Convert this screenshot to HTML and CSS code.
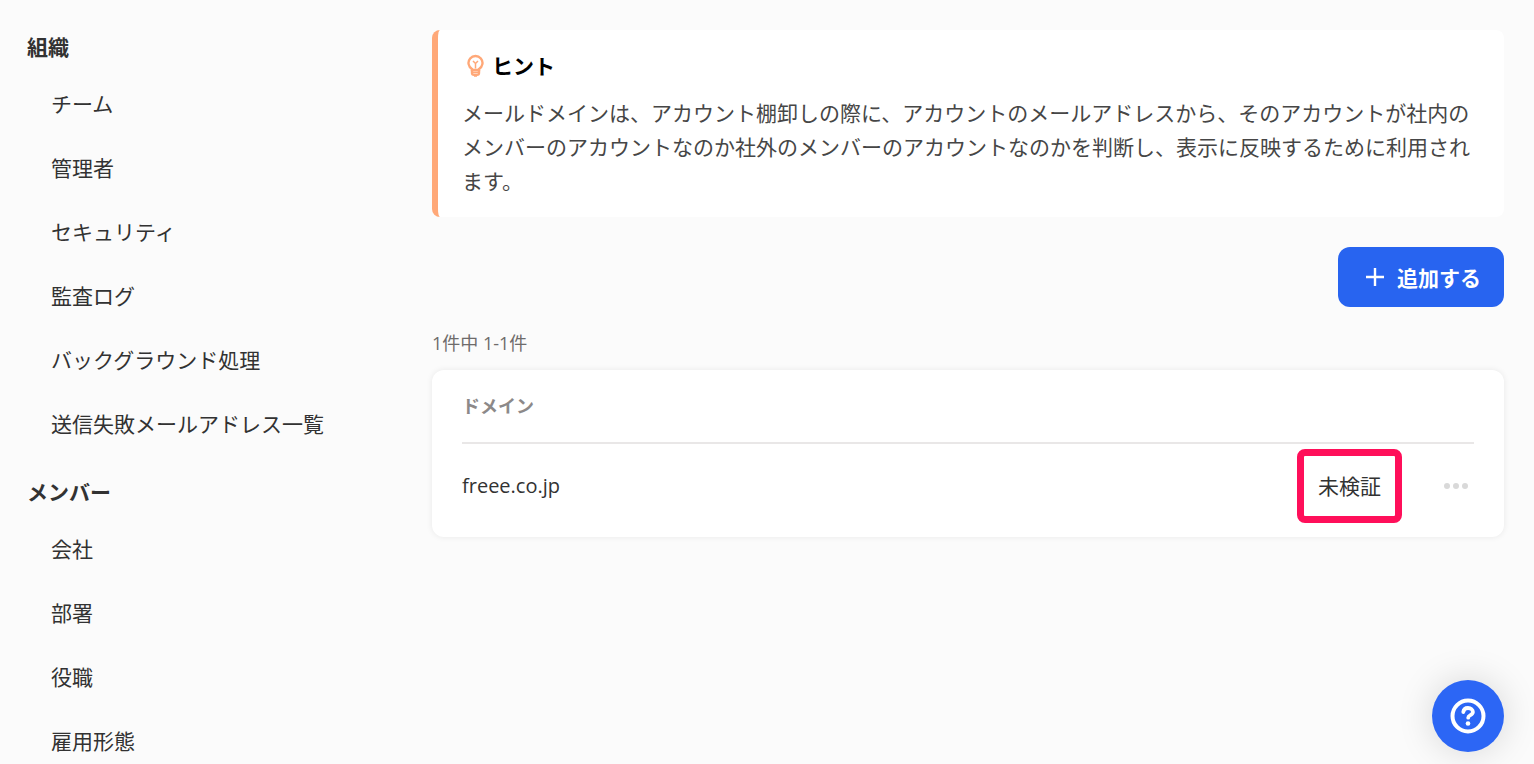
FILE: index.html
```html
<!DOCTYPE html>
<html lang="ja">

<head>
    <meta charset="UTF-8">
    <meta name="viewport" content="width=device-width, initial-scale=1.0">
    <title>メールドメイン</title>
    <link rel="stylesheet" href="styles.css">
</head>

<body>
    <div class="layout">
        <!-- サイドメニュー -->
        <nav class="sidebar">
            <h2 class="menu-title">組織</h2>
            <ul class="menu">
                <li><a href="#">チーム</a></li>
                <li><a href="#">管理者</a></li>
                <li><a href="#">セキュリティ</a></li>
                <li><a href="#">監査ログ</a></li>
                <li><a href="#">バックグラウンド処理</a></li>
                <li><a href="#">送信失敗メールアドレス一覧</a></li>
            </ul>
            <h2 class="menu-title">メンバー</h2>
            <ul class="menu">
                <li><a href="#">会社</a></li>
                <li><a href="#">部署</a></li>
                <li><a href="#">役職</a></li>
                <li><a href="#">雇用形態</a></li>
            </ul>
        </nav>

        <main class="content">
            <section class="hint">
                <h3 class="hint-title">
                    <svg class="hint-icon" width="18" height="24" viewBox="0 0 18 24" fill="none" stroke="#ffa878" stroke-width="2.4">
                        <path d="M6 15a7 7 0 1 1 7 0v1H6z" />
                        <path d="M7 7l2.5 2.5L12 7M9.5 9.500v5" stroke-width="1.500" />
                        <path d="M6 15v4c0 1 1 1.800 2 1.800h3c1 0 2-.8 2-1.800v-4" />
                        <path d="M6 18.200h7M8 22h3" stroke-width="1.600" />
                    </svg>
                    ヒント
                </h3>
                <p class="hint-text">メールドメインは、アカウント棚卸しの際に、アカウントのメールアドレスから、そのアカウントが社内のメンバーのアカウントなのか社外のメンバーのアカウントなのかを判断し、表示に反映するために利用されます。</p>
            </section>

            <div class="actions">
                <button type="button" class="add-button">
                    <svg width="18" height="18" viewBox="0 0 18 18" stroke="#fff" stroke-width="2.400">
                        <path d="M9 0v18M0 9h18" />
                    </svg>
                    追加する
                </button>
            </div>

            <p class="count">1件中 1-1件</p>

            <!-- ドメイン一覧 -->
            <div class="card">
                <table class="domains">
                    <thead>
                        <tr>
                            <th colspan="3">ドメイン</th>
                        </tr>
                    </thead>
                    <tbody>
                        <tr>
                            <td class="domain">freee.co.jp</td>
                            <td class="status"><span class="status-label">未検証</span></td>
                            <td class="more">
                                <button type="button" class="more-button" aria-label="メニュー">
                                    <svg width="24" height="6" viewBox="0 0 24 6" fill="#d9d9d9">
                                        <circle cx="3" cy="3" r="3" />
                                        <circle cx="12" cy="3" r="3" />
                                        <circle cx="21" cy="3" r="3" />
                                    </svg>
                                </button>
                            </td>
                        </tr>
                    </tbody>
                </table>
            </div>
        </main>
    </div>

    <button type="button" class="help-button" aria-label="ヘルプ">
        <svg width="36" height="36" viewBox="0 0 36 36" fill="none" stroke="#fff" stroke-linecap="round" stroke-linejoin="round">
            <circle cx="18" cy="18" r="15.500" stroke-width="4" />
            <path d="M13.300 14c.3-2.500 2.200-4 4.700-4 2.800 0 4.900 1.600 4.900 4.100 0 3.200-4.700 2.900-4.700 5.600" stroke-width="3.800" />
            <circle cx="18" cy="25.500" r="2.300" fill="#fff" stroke="none" />
        </svg>
    </button>
</body>

</html>
```
FILE: styles.css
```css
* {
    box-sizing: border-box;
}

body {
    margin: 0;
    background: #fbfbfb;
    color: #323232;
    font-family: "Open Sans", "Noto Sans CJK JP", sans-serif;
    font-size: 21px;
    line-height: 34px;
}

h2,
h3,
p,
ul {
    margin: 0;
    padding: 0;
    font-size: 21px;
}

button {
    border: 0;
    font-family: inherit;
    font-size: 21px;
    cursor: pointer;
}

.layout {
    display: flex;
}

.sidebar {
    flex: 0 0 432px;
    padding: 30px 27px 0;
}

.menu {
    list-style: none;
    padding: 8px 0 19px 24px;
}

.menu a {
    display: block;
    line-height: 64px;
    color: #323232;
    text-decoration: none;
}

.content {
    flex: 1;
    min-width: 0;
    padding: 30px 30px 30px 0;
}

.hint {
    padding: 19px 24px;
    border-left: 6px solid #ffa878;
    border-radius: 8px;
    background: #fff;
}

.hint-title {
    display: flex;
    align-items: center;
    gap: 8px;
    padding-left: 4px;
    margin-bottom: 13px;
    color: #000;
}

.hint-text {
    color: #464646;
}

.actions {
    display: flex;
    justify-content: flex-end;
    margin: 30px 0 19px;
}

.add-button {
    display: flex;
    align-items: center;
    gap: 13px;
    height: 60px;
    padding: 0 23px 0 28px;
    border-radius: 12px;
    background: #2864f0;
    color: #fff;
    font-weight: bold;
}

.count {
    margin-bottom: 10px;
    color: #6e6b6b;
    font-size: 18px;
}

.card {
    padding: 0 30px 10px;
    border-radius: 12px;
    background: #fff;
    box-shadow: 0 0 6px rgba(0, 0, 0, 0.08);
}

.domains {
    width: 100%;
    border-collapse: collapse;
}

.domains th {
    height: 73px;
    padding: 0;
    border-bottom: 2px solid #e9e7e7;
    color: #8c8989;
    font-size: 18px;
    text-align: left;
}

.domains td {
    height: 84px;
    padding: 0;
}

.domains .domain {
    font-size: 20px;
}

.domains .status {
    width: 120px;
    white-space: nowrap;
}

.status-label {
    position: relative;
}

.status-label::after {
    content: "";
    position: absolute;
    inset: -23px -21px;
    border: 7px solid #ff0f5a;
    border-radius: 8px;
}

.domains .more {
    width: 36px;
}

.more-button {
    display: flex;
    align-items: center;
    justify-content: center;
    width: 36px;
    height: 36px;
    padding: 0;
    background: none;
}

.help-button {
    position: fixed;
    right: 30px;
    bottom: 12px;
    display: flex;
    align-items: center;
    justify-content: center;
    width: 72px;
    height: 72px;
    padding: 0;
    border-radius: 50%;
    background: #2c66f5;
    box-shadow: 0 0 36px rgba(0, 0, 0, 0.15);
}
```
